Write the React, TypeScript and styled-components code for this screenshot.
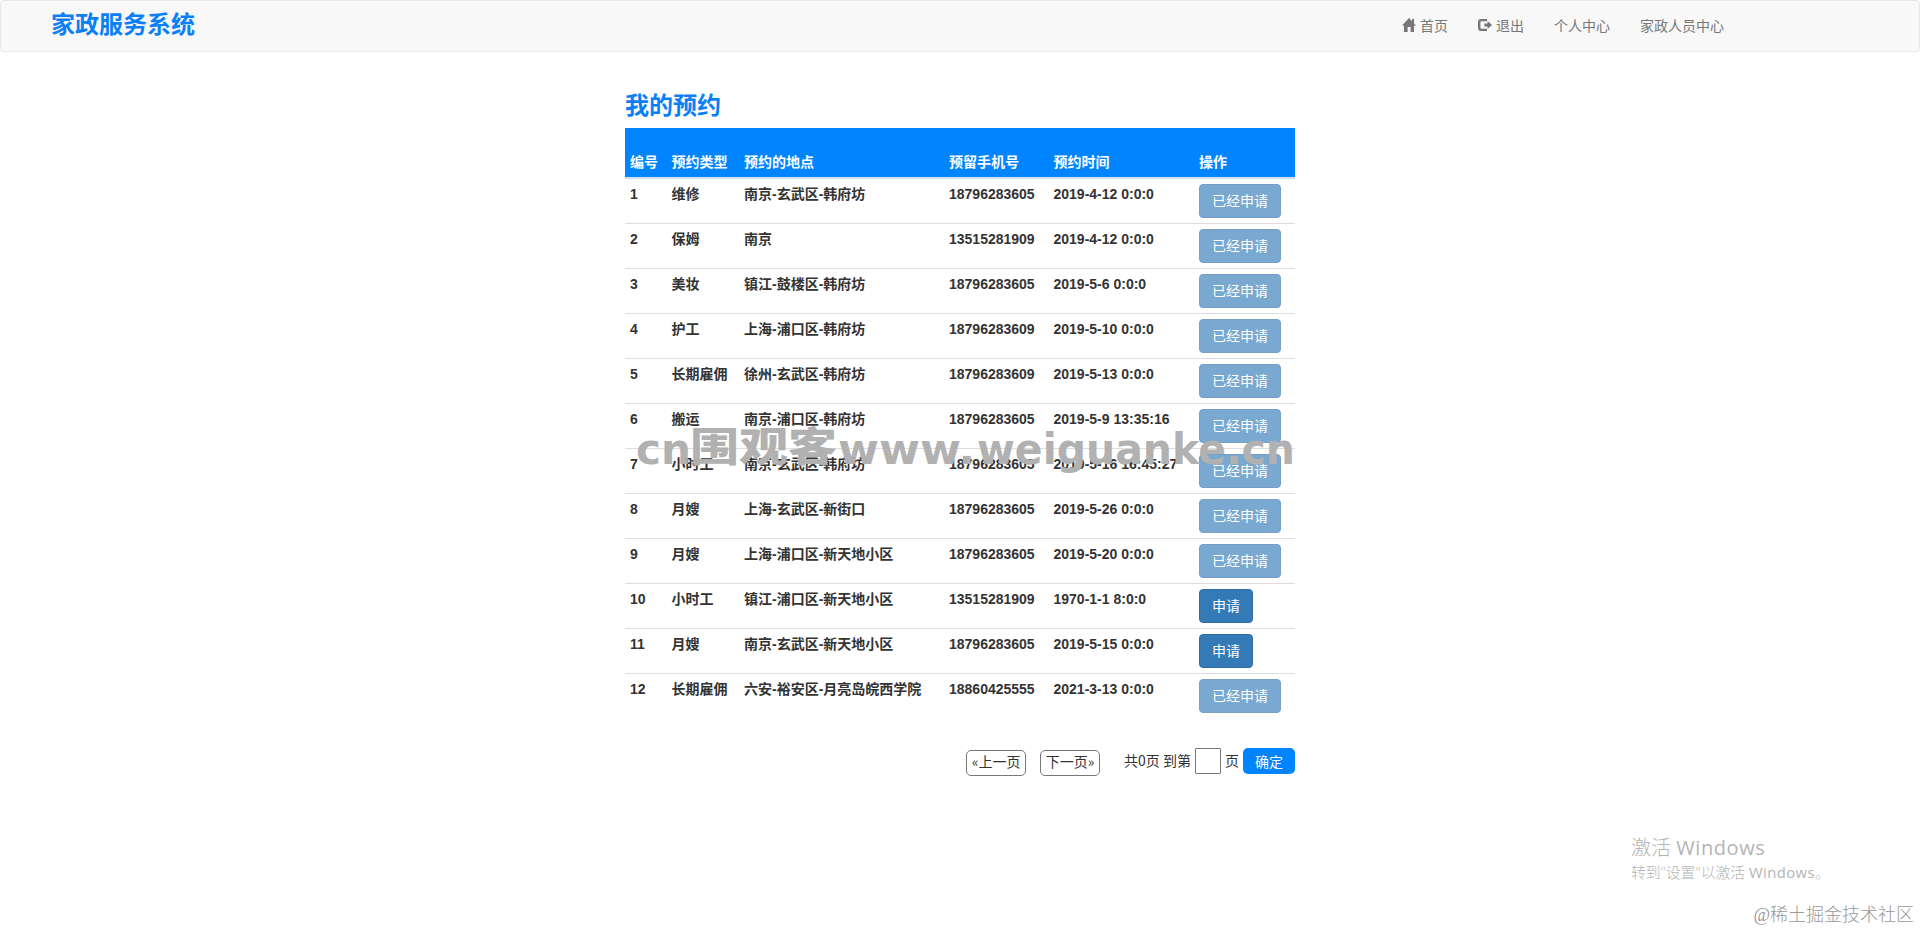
import React from "react";
import styled, { createGlobalStyle } from "styled-components";

const GlobalStyle = createGlobalStyle`
  *, *::before, *::after { box-sizing: border-box; }
  body {
    margin: 0;
    background: #fff;
    color: #333;
    font: 14px/20px "Liberation Sans", "Noto Sans CJK SC", sans-serif;
  }
`;

const Page = styled.div`
  position: relative;
  height: 931px;
  overflow: hidden;
`;

const Navbar = styled.nav`
  display: flex;
  justify-content: space-between;
  height: 52px;
  padding: 0 195px 0 50px;
  border: 1px solid #e7e7e7;
  border-radius: 4px;
  background: #f8f8f8;
`;

const Brand = styled.div`
  color: #0a80f8;
  font-size: 24px;
  font-weight: 700;
  line-height: 47px;
`;

const NavList = styled.div`
  display: flex;
  gap: 30px;
`;

const NavLink = styled.a`
  display: flex;
  align-items: center;
  gap: 4px;
  height: 50px;
  color: #777;
  line-height: 50px;

  svg { display: block; margin-top: -2px; }
`;

const Content = styled.main`
  width: 670px;
  margin: 36px auto 0;
`;

const Heading = styled.h1`
  margin: 0;
  height: 40px;
  color: #0a80f8;
  font-size: 24px;
  font-weight: 700;
  line-height: 35px;
`;

const Row = styled.div`
  display: grid;
  grid-template-columns: 41.5px 72.5px 205px 104.5px 145.5px 101px;
  height: 45px;
  padding-top: 5px;
  border-bottom: 1px solid #ddd;
  font-weight: 700;

  &:last-child { border-bottom-color: transparent; }
`;

const HeaderRow = styled(Row)`
  height: 51px;
  padding-top: 24px;
  border-bottom: 2px solid #cfe0ee;
  background: #0084ff;
  background-clip: padding-box;
  color: #fff;
`;

const Cell = styled.div`
  padding: 0 5px;
  white-space: nowrap;
`;

const ApplyButton = styled.button`
  display: block;
  height: 34px;
  padding: 0 12px;
  border: 1px solid #2e6da4;
  border-radius: 4px;
  background: #337ab7;
  color: #fff;
  font: inherit;
  font-weight: 400;

  &:disabled { opacity: 0.65; }
`;

const Pager = styled.div`
  display: flex;
  justify-content: flex-end;
  height: 28px;
  margin-top: 29px;
  line-height: 25px;
  font-family: "Noto Sans CJK SC", sans-serif;
`;

const PageButton = styled.button`
  width: 60px;
  height: 26px;
  margin: 2px 14px 0 0;
  padding: 0 0 4px;
  border: 1px solid #777;
  border-radius: 5px;
  background: #fff;
  color: #333;
  font: inherit;
  line-height: 20px;
  white-space: nowrap;
`;

const PageTotal = styled.span`
  margin-left: 10px;
  white-space: nowrap;
`;

const PageInput = styled.input`
  width: 26px;
  height: 26px;
  margin: 0 4px;
  padding: 0;
  border: 1px solid #767676;
  border-radius: 1px;
`;

const ConfirmButton = styled.button`
  width: 52px;
  height: 26px;
  margin-left: 4px;
  padding: 0;
  border: 0;
  border-radius: 5px;
  background: #0084ff;
  color: #fff;
  font: inherit;
  line-height: 25px;
`;

const Watermark = styled.svg`
  position: absolute;
  left: 630px;
  top: 415px;
  overflow: visible;
  fill: #b1b1b1;
  pointer-events: none;
  font-family: "DejaVu Sans", sans-serif;
  font-weight: 700;
`;

const ActivateNotice = styled.div`
  position: absolute;
  left: 1631px;
  top: 835px;
  color: #b4b4b4;
  font-family: "Open Sans", "Noto Sans CJK SC", sans-serif;
  font-weight: 300;
  white-space: nowrap;
`;

const NoticeTitle = styled.div`
  font-size: 20px;
  line-height: 26px;
`;

const NoticeText = styled.div`
  font-size: 14.8px;
  line-height: 22px;
`;

const Latin = styled.span`
  font-weight: 400;
  letter-spacing: 0.03em;
`;

const Credit = styled.div`
  position: absolute;
  right: 6px;
  bottom: 4px;
  color: #999;
  font: 300 18px/24px "Liberation Serif", "Noto Sans CJK SC", serif;
  white-space: nowrap;
`;

interface Booking {
  type: string;
  place: string;
  phone: string;
  time: string;
  open?: boolean;
}

const bookings: Booking[] = [
  { type: "维修", place: "南京-玄武区-韩府坊", phone: "18796283605", time: "2019-4-12 0:0:0" },
  { type: "保姆", place: "南京", phone: "13515281909", time: "2019-4-12 0:0:0" },
  { type: "美妆", place: "镇江-鼓楼区-韩府坊", phone: "18796283605", time: "2019-5-6 0:0:0" },
  { type: "护工", place: "上海-浦口区-韩府坊", phone: "18796283609", time: "2019-5-10 0:0:0" },
  { type: "长期雇佣", place: "徐州-玄武区-韩府坊", phone: "18796283609", time: "2019-5-13 0:0:0" },
  { type: "搬运", place: "南京-浦口区-韩府坊", phone: "18796283605", time: "2019-5-9 13:35:16" },
  { type: "小时工", place: "南京-玄武区-韩府坊", phone: "18796283605", time: "2019-5-16 16:45:27" },
  { type: "月嫂", place: "上海-玄武区-新街口", phone: "18796283605", time: "2019-5-26 0:0:0" },
  { type: "月嫂", place: "上海-浦口区-新天地小区", phone: "18796283605", time: "2019-5-20 0:0:0" },
  { type: "小时工", place: "镇江-浦口区-新天地小区", phone: "13515281909", time: "1970-1-1 8:0:0", open: true },
  { type: "月嫂", place: "南京-玄武区-新天地小区", phone: "18796283605", time: "2019-5-15 0:0:0", open: true },
  { type: "长期雇佣", place: "六安-裕安区-月亮岛皖西学院", phone: "18860425555", time: "2021-3-13 0:0:0" },
];

const columns = ["编号", "预约类型", "预约的地点", "预留手机号", "预约时间", "操作"];

const HomeIcon = () => (
  <svg width="14" height="14" viewBox="0 0 14 14" fill="#777">
    <path d="M7 0L14 7.4H12V14H8.6V9H5.6V14H2V7.4H0L7 0Z" />
    <path d="M10 1H12V5H10Z" />
  </svg>
);

const LogoutIcon = () => (
  <svg width="14" height="14" viewBox="0 0 14 14" fill="#777">
    <path d="M9 1H3Q0 1 0 4V10Q0 13 3 13H9V10.8H3.4Q2.4 10.8 2.4 9.8V4.2Q2.4 3.2 3.4 3.2H9Z" />
    <path d="M9.6 3L14 7L9.6 11V8.4H6.4V5.6H9.6Z" />
  </svg>
);

export default function App() {
  return (
    <Page>
      <GlobalStyle />
      <Navbar>
        <Brand>家政服务系统</Brand>
        <NavList>
          <NavLink><HomeIcon />首页</NavLink>
          <NavLink><LogoutIcon />退出</NavLink>
          <NavLink>个人中心</NavLink>
          <NavLink>家政人员中心</NavLink>
        </NavList>
      </Navbar>
      <Content>
        <Heading>我的预约</Heading>
        <div>
          <HeaderRow>
            {columns.map((name) => <Cell key={name}>{name}</Cell>)}
          </HeaderRow>
          {bookings.map((b, i) => (
            <Row key={i}>
              <Cell>{i + 1}</Cell>
              <Cell>{b.type}</Cell>
              <Cell>{b.place}</Cell>
              <Cell>{b.phone}</Cell>
              <Cell>{b.time}</Cell>
              <Cell>
                <ApplyButton disabled={!b.open}>{b.open ? "申请" : "已经申请"}</ApplyButton>
              </Cell>
            </Row>
          ))}
        </div>
        <Pager>
          <PageButton>«上一页</PageButton>
          <PageButton>下一页»</PageButton>
          <PageTotal>共0页 到第</PageTotal>
          <PageInput />
          <span>页</span>
          <ConfirmButton>确定</ConfirmButton>
        </Pager>
      </Content>
      <Watermark width="670" height="66">
        <text x="6" y="49" fontSize="43" textLength="55" lengthAdjust="spacingAndGlyphs">cn</text>
        <text x="60" y="46" fontSize="40" fontFamily="Noto Sans CJK SC" fontWeight="900" textLength="147" lengthAdjust="spacingAndGlyphs">围观客</text>
        <text x="208" y="49" fontSize="43" textLength="137" lengthAdjust="spacingAndGlyphs">www.</text>
        <text x="347" y="49" fontSize="43" textLength="318" lengthAdjust="spacingAndGlyphs">weiguanke.cn</text>
      </Watermark>
      <ActivateNotice>
        <NoticeTitle>激活 <Latin>Windows</Latin></NoticeTitle>
        <NoticeText>转到"设置"以激活 <Latin>Windows</Latin>。</NoticeText>
      </ActivateNotice>
      <Credit>@稀土掘金技术社区</Credit>
    </Page>
  );
}
